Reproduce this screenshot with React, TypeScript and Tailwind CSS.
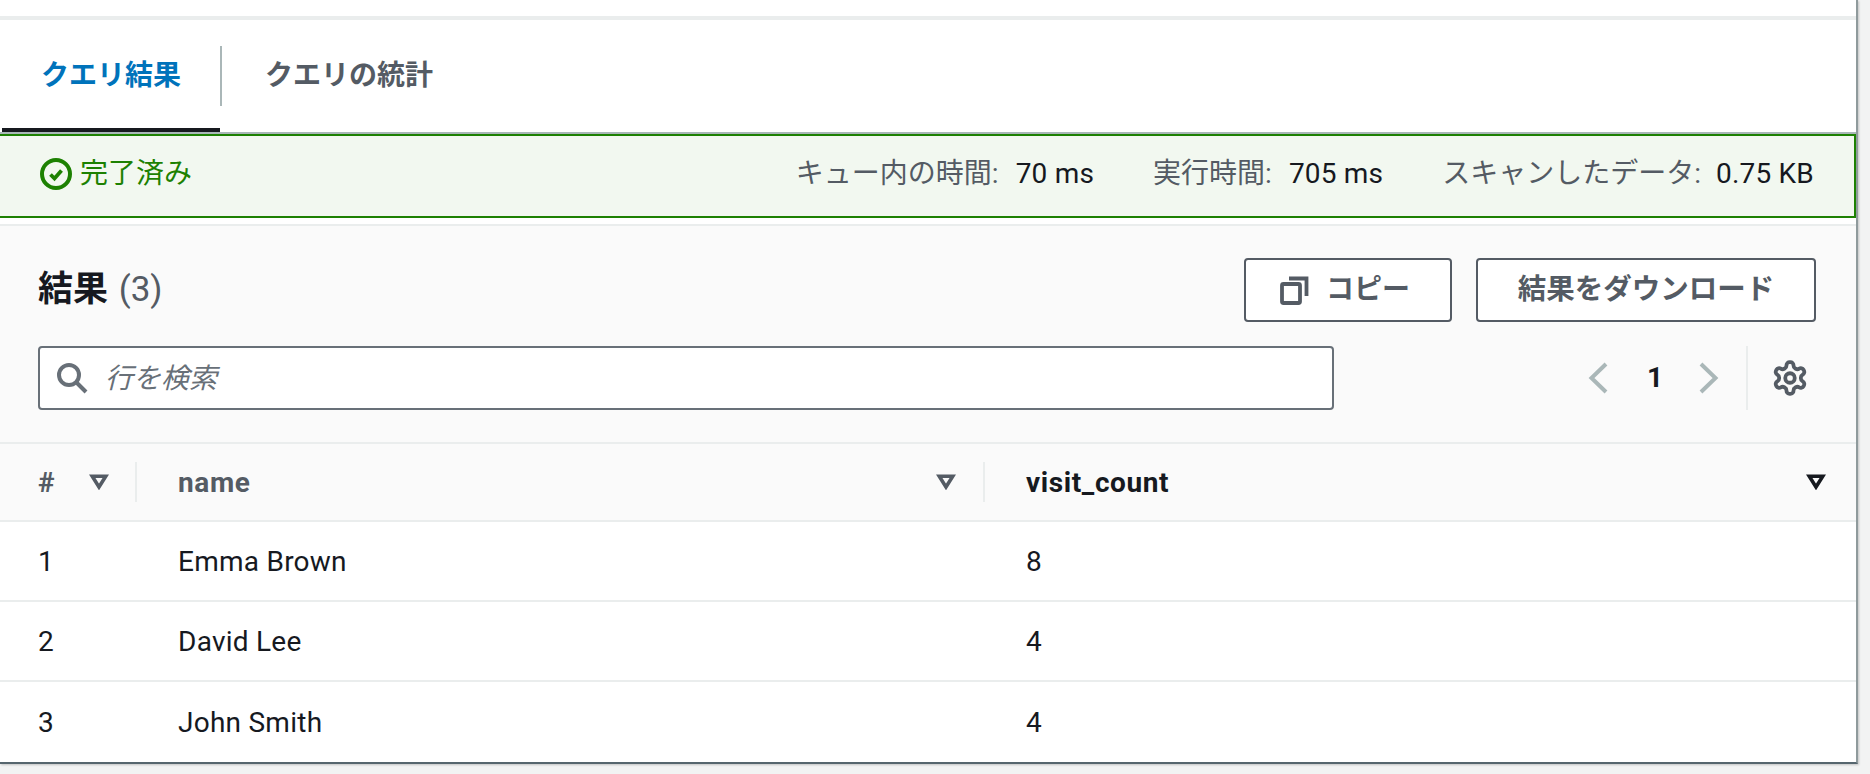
import React from "react";

const font = "font-['Roboto','Noto_Sans_CJK_JP',sans-serif]";

function SortIcon({ color = "#545b64" }: { color?: string }) {
  return (
    <svg width="20" height="16" viewBox="0 0 20 16" fill="none" className="block">
      <path d="M3.2 2.2 H16.8 L10 13 Z" stroke={color} strokeWidth="3.6" strokeLinejoin="miter" />
    </svg>
  );
}

function Row({ n, name, count, last }: { n: string; name: string; count: string; last?: boolean }) {
  return (
    <div className={"grid h-20 grid-cols-[137px_848px_1fr] items-center pt-[2px] tracking-[0.25px] text-[#16191f] " + (last ? "" : "border-b-2 border-[#eaeded]")}>
      <div className="pl-[38px]">{n}</div>
      <div className="pl-[41px]">{name}</div>
      <div className="pl-[41px]">{count}</div>
    </div>
  );
}

export default function App() {
  return (
    <div className={"h-[774px] w-[1870px] overflow-hidden bg-[#f2f3f3] text-[28px] leading-[36px] " + font}>
      <div className="w-[1858px] border-r-2 border-b-2 border-r-[#8f9a9c] border-b-[#56666e] bg-white shadow-[1px_1px_2px_rgba(0,0,0,0.2)]">
        <div className="h-4" />
        <div className="h-1 bg-[#eaeded]" />
        {/* Tabs */}
        <div className="flex h-[114px] border-b-2 border-[#aab7b8] text-[28px] font-bold">
          <div className="ml-[2px] flex h-[112px] w-[218px] items-center border-b-4 border-[#16191f] pl-[39px] pt-[4px] text-[#0073bb]">
            クエリ結果
          </div>
          <div className="mt-[26px] h-[60px] w-[2px] bg-[#aab7b8]" />
          <div className="flex h-[112px] items-center pl-[43px] text-[#545b64]">クエリの統計</div>
        </div>
        {/* Flash */}
        <div className="flex h-[84px] items-center justify-between border-y-2 border-r-2 border-[#1d8102] bg-[#f2f8f0] pb-[5px] pl-[40px] pr-[40px]">
          <div className="flex items-center text-[#1d8102]">
            <svg width="32" height="32" viewBox="0 0 32 32" fill="none" className="mr-[8px]">
              <circle cx="16" cy="16" r="14" stroke="#1d8102" strokeWidth="4" />
              <path d="M10.5 16.5 L14.5 20.5 L21.5 12.5" stroke="#1d8102" strokeWidth="3.8" />
            </svg>
            完了済み
          </div>
          <div className="flex items-center">
            <span className="text-[#545b64]">キュー内の時間:</span>
            <span className="ml-[17px] tracking-[0.2px] text-[#16191f]">70 ms</span>
            <span className="ml-[59px] text-[#545b64]">実行時間:</span>
            <span className="ml-[17px] tracking-[0.2px] text-[#16191f]">705 ms</span>
            <span className="ml-[59px] text-[#545b64]">スキャンしたデータ:</span>
            <span className="ml-[15px] tracking-[0.2px] text-[#16191f]">0.75 KB</span>
          </div>
        </div>
        <div className="h-[6px]" />
        {/* Table panel */}
        <div className="border-t-2 border-[#eaeded] bg-[#fafafa]">
          <div className="flex h-[218px] flex-col justify-between border-b-2 border-[#eaeded] pb-[32px] pt-[32px]">
            <div className="flex items-center justify-between pl-[38px] pr-[40px]">
              <div className="text-[35px] font-bold text-[#16191f]">
                結果 <span className="ml-[2px] font-normal text-[#545b64]">(3)</span>
              </div>
              <div className="flex gap-[24px]">
                <button className="flex h-16 w-[208px] items-center justify-center gap-[17px] rounded-[4px] border-2 border-[#545b64] bg-white pr-[6px] font-bold text-[#545b64]">
                  <svg width="29" height="29" viewBox="0 0 29 29" fill="none">
                    <rect x="2" y="8" width="18" height="19" rx="1.5" stroke="#545b64" strokeWidth="3.8" />
                    <path d="M9 2.5 H26.5 V20" stroke="#545b64" strokeWidth="3.8" />
                  </svg>
                  コピー
                </button>
                <button className="flex h-16 w-[340px] items-center justify-center rounded-[4px] border-2 border-[#545b64] bg-white text-[28.5px] font-bold text-[#545b64]">
                  結果をダウンロード
                </button>
              </div>
            </div>
            <div className="flex items-center pl-[38px]">
              <div className="flex h-16 w-[1296px] items-center rounded-[4px] border-2 border-[#687078] bg-white pl-[16px]">
                <svg width="32" height="32" viewBox="0 0 32 32" fill="none" className="shrink-0">
                  <circle cx="13" cy="13" r="10" stroke="#687078" strokeWidth="4" />
                  <path d="M20 20 L30 30" stroke="#687078" strokeWidth="4" />
                </svg>
                <span className="ml-[17px] pt-[2px] italic text-[#687078]">行を検索</span>
              </div>
              <div className="ml-[254px] flex items-center">
                <svg width="20" height="32" viewBox="0 0 20 32" fill="none">
                  <path d="M18 2 L3.5 16 L18 30" stroke="#aab7b8" strokeWidth="4" />
                </svg>
                <span className="ml-[39px] w-[16px] font-bold text-[#16191f]">1</span>
                <svg width="20" height="32" viewBox="0 0 20 32" fill="none" className="ml-[36px]">
                  <path d="M2 2 L16.5 16 L2 30" stroke="#aab7b8" strokeWidth="4" />
                </svg>
                <div className="ml-[27px] h-16 w-[2px] bg-[#eaeded]" />
                <svg width="38" height="38" viewBox="0 0 24 24" fill="none" className="ml-[23px]" stroke="#545b64" strokeWidth="2.4">
                  <path d="M12.22 2h-.44a2 2 0 0 0-2 2v.18a2 2 0 0 1-1 1.73l-.43.25a2 2 0 0 1-2 0l-.15-.08a2 2 0 0 0-2.73.73l-.22.38a2 2 0 0 0 .73 2.73l.15.1a2 2 0 0 1 1 1.72v.51a2 2 0 0 1-1 1.74l-.15.09a2 2 0 0 0-.73 2.73l.22.38a2 2 0 0 0 2.73.73l.15-.08a2 2 0 0 1 2 0l.43.25a2 2 0 0 1 1 1.73V20a2 2 0 0 0 2 2h.44a2 2 0 0 0 2-2v-.18a2 2 0 0 1 1-1.73l.43-.25a2 2 0 0 1 2 0l.15.08a2 2 0 0 0 2.73-.73l.22-.39a2 2 0 0 0-.73-2.73l-.15-.08a2 2 0 0 1-1-1.74v-.5a2 2 0 0 1 1-1.74l.15-.09a2 2 0 0 0 .73-2.73l-.22-.38a2 2 0 0 0-2.73-.73l-.15.08a2 2 0 0 1-2 0l-.43-.25a2 2 0 0 1-1-1.73V4a2 2 0 0 0-2-2z" />
                  <circle cx="12" cy="12" r="3" />
                </svg>
              </div>
            </div>
          </div>
          <div className="grid h-[76px] grid-cols-[137px_848px_1fr] items-center font-bold tracking-[0.6px] text-[#545b64]">
            <div className="flex h-10 items-center justify-between border-r-2 border-[#eaeded] pl-[38px] pr-[26px]">
              <span className="pt-[2px]">#</span>
              <SortIcon />
            </div>
            <div className="flex h-10 items-center justify-between border-r-2 border-[#eaeded] pl-[41px] pr-[27px]">
              <span className="pt-[2px]">name</span>
              <SortIcon />
            </div>
            <div className="flex items-center justify-between pl-[41px] pr-[30px] text-[#16191f]">
              <span className="pt-[2px]">visit_count</span>
              <SortIcon color="#16191f" />
            </div>
          </div>
        </div>
        {/* Body */}
        <div className="border-t-2 border-[#eaeded]">
          <Row n="1" name="Emma Brown" count="8" />
          <Row n="2" name="David Lee" count="4" />
          <Row n="3" name="John Smith" count="4" last />
        </div>
      </div>
    </div>
  );
}
